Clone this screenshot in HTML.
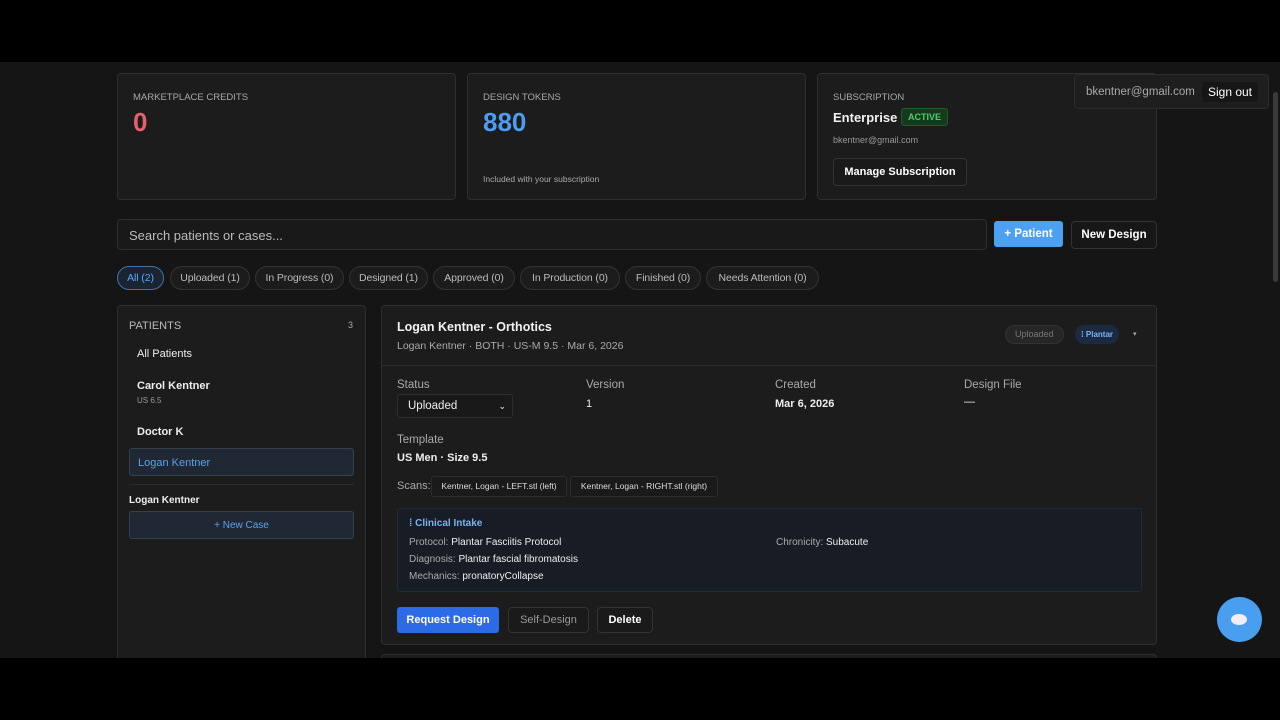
<!DOCTYPE html>
<html><head><meta charset="utf-8"><style>
*{box-sizing:border-box;margin:0;padding:0}
body{width:1280px;height:720px;background:#000;font-family:"Liberation Sans",sans-serif;color:#e8e8e8;overflow:hidden;position:relative}
.page{position:absolute;left:0;top:62px;width:1280px;height:596px;background:#151515;overflow:hidden}
.a{position:absolute}
.card{position:absolute;background:#1c1c1c;border:1px solid #2f2f2f;border-radius:4px}
.lbl{font-size:9.5px;color:#a8a8a8}
.pill{position:absolute;top:204px;height:24px;border:1px solid #333;border-radius:12px;background:#1c1c1c;font-size:10.5px;color:#bbb;line-height:22px;text-align:center;white-space:nowrap;letter-spacing:-.1px}
.btn{position:absolute;border:1px solid #333;border-radius:4px;background:#1a1a1a;font-size:12px;color:#fff;text-align:center}
.g{color:#aaa;font-size:11.5px}
</style></head><body>
<div class="page">
<div class="card" style="left:117px;top:11px;width:339px;height:127px">
 <div class="lbl a" style="left:15px;top:18px">MARKETPLACE CREDITS</div>
 <div class="a" style="left:15px;top:33px;font-size:26px;font-weight:bold;color:#e5606e">0</div>
</div>
<div class="card" style="left:467px;top:11px;width:339px;height:127px">
 <div class="lbl a" style="left:15px;top:18px">DESIGN TOKENS</div>
 <div class="a" style="left:15px;top:33px;font-size:26px;font-weight:bold;color:#4d9cf0">880</div>
 <div class="a" style="left:15px;top:100px;font-size:8.5px;color:#aaa">Included with your subscription</div>
</div>
<div class="card" style="left:817px;top:11px;width:340px;height:127px">
 <div class="lbl a" style="left:15px;top:18px">SUBSCRIPTION</div>
 <div class="a" style="left:15px;top:36px;font-size:13px;font-weight:bold;color:#f2f2f2">Enterprise</div>
 <div class="a" style="left:83px;top:34px;height:18px;padding:0 6px;border:1px solid #1f5a2a;background:#173a1f;border-radius:3px;color:#4ccf6a;font-size:9px;font-weight:bold;line-height:16px">ACTIVE</div>
 <div class="a" style="left:15px;top:61px;font-size:9px;color:#999">bkentner@gmail.com</div>
 <div class="btn" style="left:15px;top:84px;width:134px;height:28px;line-height:26px;font-weight:bold;font-size:11px">Manage Subscription</div>
</div>
<div class="a" style="left:1074px;top:12px;width:195px;height:35px;background:#1e1e1e;border:1px solid #2c2c2c;border-radius:4px">
 <div class="a" style="left:11px;top:11px;font-size:11.5px;color:#aaa">bkentner@gmail.com</div>
 <div class="a" style="left:127px;top:7px;width:56px;height:20px;background:#161616;border-radius:3px;font-size:12px;line-height:20px;text-align:center;color:#fff">Sign out</div>
</div>
<div class="a" style="left:1273px;top:30px;width:5px;height:190px;background:#3a3a3a;border-radius:3px"></div>
<div class="card" style="left:117px;top:157px;width:870px;height:31px;background:#191919">
 <div class="a" style="left:11px;top:8px;font-size:13px;color:#bbb">Search patients or cases...</div>
</div>
<div class="a" style="left:994px;top:159px;width:69px;height:26px;background:#4da1f2;border-radius:3px;color:#fff;font-size:11.5px;font-weight:bold;text-align:center;line-height:26px">+ Patient</div>
<div class="btn" style="left:1071px;top:159px;width:86px;height:28px;line-height:26px;font-weight:bold;font-size:11.5px;background:#171717">New Design</div>
<div class="pill" style="left:117px;width:47px;color:#5aa6f5;border-color:#3f74aa;background:#1a2533">All (2)</div>
<div class="pill" style="left:170px;width:80px">Uploaded (1)</div>
<div class="pill" style="left:255px;width:89px">In Progress (0)</div>
<div class="pill" style="left:349px;width:79px">Designed (1)</div>
<div class="pill" style="left:433px;width:82px">Approved (0)</div>
<div class="pill" style="left:520px;width:100px">In Production (0)</div>
<div class="pill" style="left:625px;width:76px">Finished (0)</div>
<div class="pill" style="left:706px;width:113px">Needs Attention (0)</div>
<div class="card" style="left:117px;top:243px;width:249px;height:370px">
 <div class="a" style="left:11px;top:14px;font-size:11px;color:#bbb">PATIENTS</div>
 <div class="a" style="left:230px;top:14px;font-size:9px;color:#aaa">3</div>
 <div class="a" style="left:19px;top:42px;font-size:11px;color:#eee">All Patients</div>
 <div class="a" style="left:19px;top:74px;font-size:11px;font-weight:bold;color:#eee">Carol Kentner</div>
 <div class="a" style="left:19px;top:90px;font-size:8px;color:#999">US 6.5</div>
 <div class="a" style="left:19px;top:120px;font-size:11px;font-weight:bold;color:#eee">Doctor K</div>
 <div class="a" style="left:11px;top:142px;width:225px;height:28px;background:#1f2833;border:1px solid #34404e;border-radius:3px"><div class="a" style="left:8px;top:8px;font-size:11px;color:#5aa2ef">Logan Kentner</div></div>
 <div class="a" style="left:11px;top:178px;width:225px;height:1px;background:#2d2d2d"></div>
 <div class="a" style="left:11px;top:189px;font-size:10px;font-weight:bold;color:#eee">Logan Kentner</div>
 <div class="a" style="left:11px;top:205px;width:225px;height:28px;background:#1f2833;border:1px solid #34404e;border-radius:3px;font-size:10px;color:#5aa2ef;text-align:center;line-height:28px">+ New Case</div>
</div>
<div class="card" style="left:381px;top:243px;width:776px;height:340px">
 <div class="a" style="left:15px;top:14px;font-size:12.5px;font-weight:bold;color:#f2f2f2">Logan Kentner - Orthotics</div>
 <div class="a" style="left:15px;top:34px;font-size:10.5px;color:#aaa">Logan Kentner · BOTH · US-M 9.5 · Mar 6, 2026</div>
 <div class="a" style="left:623px;top:19px;height:19px;padding:0 9px;border-radius:10px;background:#262626;border:1px solid #333;font-size:9px;color:#777;line-height:17px">Uploaded</div>
 <div class="a" style="left:693px;top:19px;height:19px;padding:0 6px;border-radius:10px;background:#1b2a40;font-size:8px;color:#7db4f5;line-height:19px;font-weight:bold">⁞ Plantar</div>
 <div class="a" style="left:751px;top:24px;font-size:7px;color:#aaa">▾</div>
 <div class="a" style="left:0;top:59px;width:774px;height:1px;background:#2a2a2a"></div>
 <div class="a g" style="left:15px;top:73px">Status</div>
 <div class="a" style="left:15px;top:88px;width:116px;height:24px;border:1px solid #2e2e2e;border-radius:3px;background:#191919;font-size:11.5px;line-height:22px;padding-left:10px;color:#eee">Uploaded<span style="position:absolute;right:6px;font-size:9px">⌄</span></div>
 <div class="a g" style="left:204px;top:73px">Version</div>
 <div class="a" style="left:204px;top:92px;font-size:11px;color:#eee">1</div>
 <div class="a g" style="left:393px;top:73px">Created</div>
 <div class="a" style="left:393px;top:92px;font-size:11px;font-weight:bold;color:#eee">Mar 6, 2026</div>
 <div class="a g" style="left:582px;top:73px">Design File</div>
 <div class="a" style="left:582px;top:90px;font-size:11px;color:#eee">—</div>
 <div class="a g" style="left:15px;top:128px">Template</div>
 <div class="a" style="left:15px;top:146px;font-size:11px;font-weight:bold;color:#eee">US Men · Size 9.5</div>
 <div class="a g" style="left:15px;top:174px;font-size:11px">Scans:</div>
 <div class="a" style="left:49px;top:170px;width:136px;height:21px;border:1px solid #2d2d2d;border-radius:3px;background:#1a1a1a;font-size:8.5px;line-height:19px;color:#ddd;text-align:center;white-space:nowrap">Kentner, Logan - LEFT.stl (left)</div>
 <div class="a" style="left:188px;top:170px;width:148px;height:21px;border:1px solid #2d2d2d;border-radius:3px;background:#1a1a1a;font-size:8.5px;line-height:19px;color:#ddd;text-align:center;white-space:nowrap">Kentner, Logan - RIGHT.stl (right)</div>
 <div class="a" style="left:15px;top:202px;width:745px;height:84px;background:#181d25;border:1px solid #232b38;border-radius:3px">
  <div class="a" style="left:11px;top:9px;font-size:10px;color:#78b2f2;font-weight:bold">⁞ Clinical Intake</div>
  <div class="a" style="left:11px;top:28px;font-size:10px;color:#aaa">Protocol: <span style="color:#eee">Plantar Fasciitis Protocol</span></div>
  <div class="a" style="left:11px;top:45px;font-size:10px;color:#aaa">Diagnosis: <span style="color:#eee">Plantar fascial fibromatosis</span></div>
  <div class="a" style="left:11px;top:62px;font-size:10px;color:#aaa">Mechanics: <span style="color:#eee">pronatoryCollapse</span></div>
  <div class="a" style="left:378px;top:28px;font-size:10px;color:#aaa">Chronicity: <span style="color:#eee">Subacute</span></div>
 </div>
 <div class="a" style="left:15px;top:301px;width:102px;height:26px;background:#2c6ae6;border-radius:3px;color:#fff;font-size:11px;font-weight:bold;text-align:center;line-height:26px">Request Design</div>
 <div class="btn" style="left:126px;top:301px;width:81px;height:26px;line-height:24px;color:#999;font-size:11px">Self-Design</div>
 <div class="btn" style="left:215px;top:301px;width:56px;height:26px;line-height:24px;font-size:11px;font-weight:bold">Delete</div>
</div>
<div class="card" style="left:381px;top:592px;width:776px;height:20px"></div>
<div class="a" style="left:1217px;top:535px;width:45px;height:45px;border-radius:50%;background:#4a9ef0"><div class="a" style="left:14px;top:17px;width:16px;height:11px;border-radius:50%;background:#f3eef2"></div></div>
</div>
</body></html>
